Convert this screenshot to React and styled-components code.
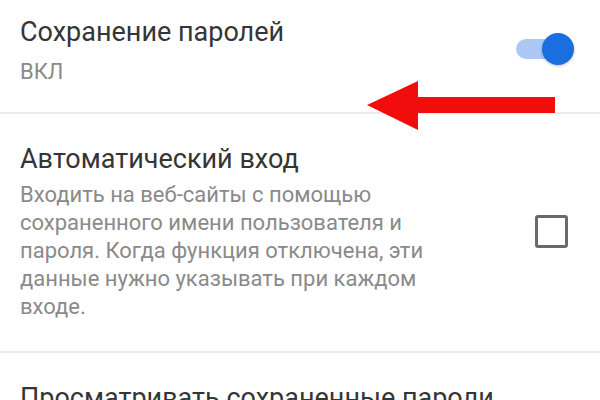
import React from "react";
import styled, { createGlobalStyle } from "styled-components";

const Global = createGlobalStyle`
  html, body { margin: 0; padding: 0; background: #ffffff; }
  body { font-family: Roboto, "Noto Sans", "Liberation Sans", sans-serif; }
`;

const Screen = styled.div`
  position: relative;
  width: 600px;
  height: 400px;
  overflow: hidden;
  background: #fff;
`;

const Row = styled.div`
  display: flex;
  align-items: ${(p) => (p.$top ? "flex-start" : "center")};
  padding: ${(p) => p.$pad};
  border-bottom: ${(p) => (p.$last ? "none" : "2px solid #ececec")};
`;

const Texts = styled.div`
  flex: 1;
  display: flex;
  flex-direction: column;
  padding-left: 20px;
`;

const Title = styled.div`
  font-size: 27px;
  line-height: 32px;
  color: #353535;
  white-space: nowrap;
`;

const Sub = styled.div`
  font-size: 22px;
  line-height: 28px;
  color: #8a8a8a;
  margin-top: ${(p) => p.$gap || 0}px;
`;

const SwitchWrap = styled.div`
  position: relative;
  width: 58px;
  height: 32px;
  margin: 17px 26px 0 0;
`;

const Track = styled.div`
  position: absolute;
  left: 0;
  top: 6px;
  width: 48px;
  height: 20px;
  border-radius: 10px;
  background: #abc9f4;
`;

const Knob = styled.div`
  position: absolute;
  right: 0;
  top: 0;
  width: 32px;
  height: 32px;
  border-radius: 50%;
  background: #1a6fe0;
  box-shadow: 0 1px 3px rgba(0, 0, 0, 0.25);
`;

const Checkbox = styled.div`
  width: 27px;
  height: 27px;
  border: 3px solid #6a6a6a;
  border-radius: 3px;
  margin-right: 32px;
  margin-top: -2px;
`;

const Arrow = styled.svg`
  position: absolute;
  left: 360px;
  top: 76px;
`;

export default function App() {
  return (
    <Screen>
      <Global />
      <Row $top $pad="16px 0 26px 0">
        <Texts>
          <Title>Сохранение паролей</Title>
          <Sub $gap={10}>ВКЛ</Sub>
        </Texts>
        <SwitchWrap>
          <Track />
          <Knob />
        </SwitchWrap>
      </Row>
      <Row $pad="29px 0 30px 0">
        <Texts>
          <Title>Автоматический вход</Title>
          <Sub $gap={6}>
            Входить на веб-сайты с помощью
            <br />
            сохраненного имени пользователя и
            <br />
            пароля. Когда функция отключена, эти
            <br />
            данные нужно указывать при каждом
            <br />
            входе.
          </Sub>
        </Texts>
        <Checkbox />
      </Row>
      <Row $last $pad="29px 0 0 0">
        <Texts>
          <Title>Просматривать сохраненные пароли</Title>
        </Texts>
      </Row>
      <Arrow width="200" height="60" viewBox="0 0 200 60">
        <polygon points="7,29 58,5 58,21 195,21 195,37 58,37 58,54" fill="#f20d0d" />
      </Arrow>
    </Screen>
  );
}
